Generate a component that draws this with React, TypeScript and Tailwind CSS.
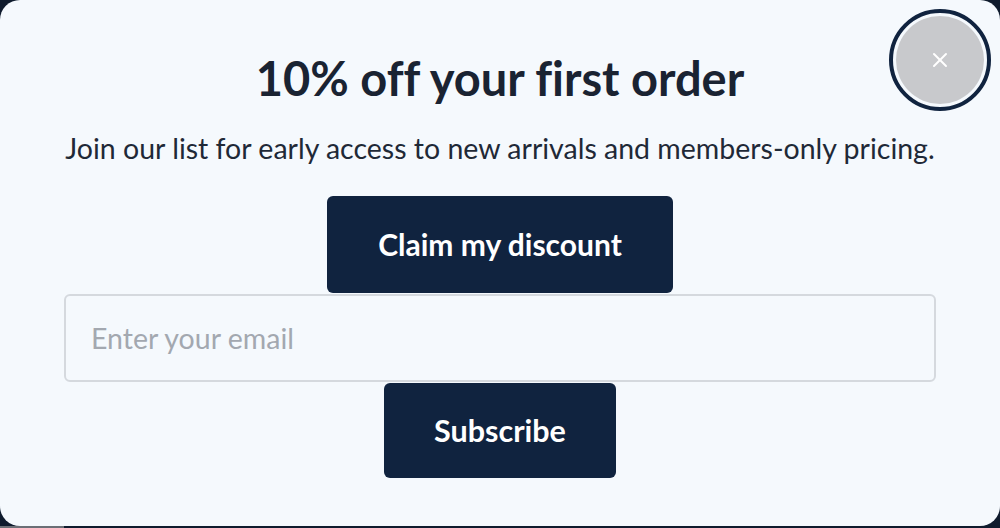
import { X } from "lucide-react";

export default function App() {
  return (
    <div className="w-[1000px] h-[528px] bg-[#0f1b2d] flex flex-col overflow-hidden font-['Lato',sans-serif] [font-variant-ligatures:none]">
      <div className="relative h-[526px] bg-[#f5f9fd] rounded-[20px] flex flex-col items-center pt-[52px] px-[64px]">
        <h1 className="text-[47px] leading-[52px] font-bold text-[#1a2332]">10% off your first order</h1>
        <p className="mt-[26px] text-[28.5px] leading-[36px] text-[#1f2937] whitespace-nowrap">
          Join our list for early access to new arrivals and members-only pricing.
        </p>
        <button className="mt-[30px] w-[346px] h-[97px] rounded-[6px] bg-[#10233f] text-white text-[30px] font-bold">
          Claim my discount
        </button>
        <input
          placeholder="Enter your email"
          className="mt-px w-full h-[88px] rounded-[6px] border-2 border-[#d5d9de] bg-transparent px-[25px] text-[28.5px] text-[#1f2937] placeholder:text-[#a3a8b0] outline-none"
        />
        <button className="mt-px w-[232px] h-[95px] rounded-[6px] bg-[#10233f] text-white text-[30.5px] font-bold">
          Subscribe
        </button>
        <button className="absolute top-[9px] right-[9px] w-[102px] h-[102px] rounded-full border-4 border-[#10233f] bg-[#f5f9fd] p-[3px]">
          <span className="w-full h-full rounded-full bg-[#c8c9cc] flex items-center justify-center">
            <X className="w-[24px] h-[24px] text-white" strokeWidth={2} />
          </span>
        </button>
      </div>
      <div className="flex h-[2px]">
        <div className="w-[64px] bg-[#6b6f76]" />
        <div className="flex-1" />
      </div>
    </div>
  );
}
